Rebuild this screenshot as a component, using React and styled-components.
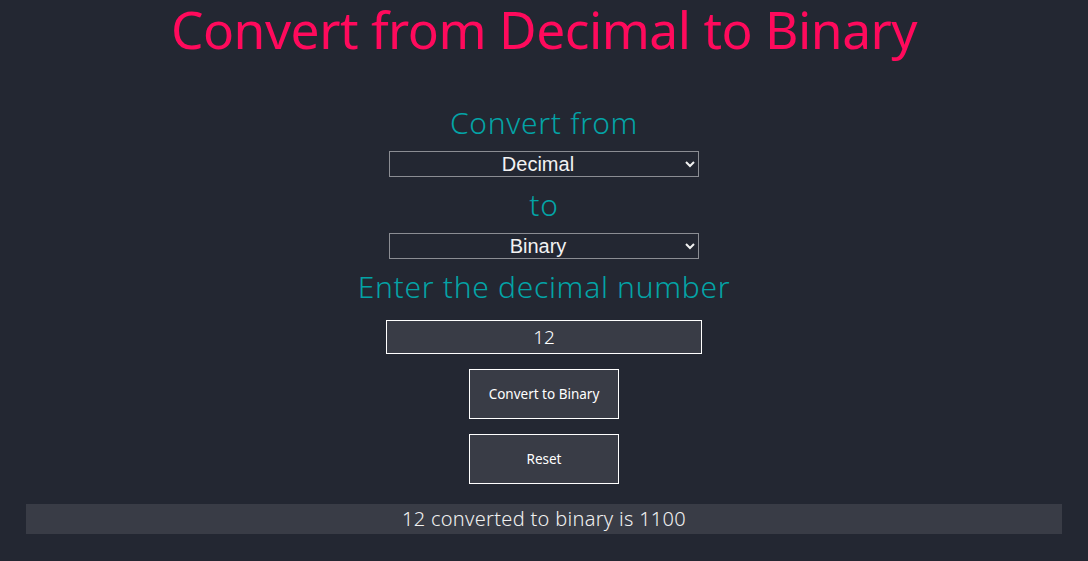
import styled, { createGlobalStyle } from "styled-components";

const GlobalStyle = createGlobalStyle`
  html, body {
    margin: 0;
    background: #232732;
  }
  body {
    font-family: "Noto Sans", sans-serif;
  }
`;

const App = () => {
  return (
    <>
      <GlobalStyle />
      <Page>
        <Title>Convert from Decimal to Binary</Title>

        <Form>
          <Label>Convert from</Label>
          <Select defaultValue='decimal'>
            <option value='decimal'>Decimal</option>
            <option value='binary'>Binary</option>
          </Select>

          <Label>to</Label>
          <Select defaultValue='binary'>
            <option value='decimal'>Decimal</option>
            <option value='binary'>Binary</option>
          </Select>

          <Label>Enter the decimal number</Label>
          <NumberInput defaultValue='12' />

          <Button $top={ 15 }>Convert to Binary</Button>
          <Button $top={ 15 }>Reset</Button>
        </Form>

        <Result>12 converted to binary is 1100</Result>
      </Page>
    </>
  );
}

const Page = styled.div`
  display: flex;
  flex-direction: column;
  align-items: center;
  padding: 0 26px;
`;

const Title = styled.h1`
  margin: 0;
  padding: 0 4px;
  font-family: "Noto Sans", sans-serif;
  font-weight: 400;
  font-size: 51.5px;
  line-height: 58px;
  color: #ff0a5c;
  letter-spacing: -0.5px;
  white-space: nowrap;
`;

const Form = styled.div`
  display: flex;
  flex-direction: column;
  align-items: center;
  margin-top: 37px;
`;

const Label = styled.div`
  font-family: "Noto Sans", sans-serif;
  font-weight: 300;
  font-size: 30px;
  line-height: 56px;
  letter-spacing: 0.7px;
  color: #03a3a6;
`;

const Select = styled.select`
  width: 310px;
  height: 26px;
  background: transparent;
  color: #f2f2f2;
  border: 1px solid #8b8d93;
  border-radius: 0;
  font-family: "Liberation Sans", Arial, sans-serif;
  font-size: 20px;
  text-align: center;
  text-align-last: center;

  option {
    background: #232732;
  }
`;

const NumberInput = styled.input`
  box-sizing: border-box;
  width: 316px;
  height: 34px;
  margin-top: 5px;
  background: #393c46;
  border: 1px solid #ffffff;
  color: #ffffff;
  font-family: "Noto Sans", sans-serif;
  font-weight: 300;
  font-size: 19px;
  text-align: center;
  outline: none;
`;

const Button = styled.button`
  box-sizing: border-box;
  width: 150px;
  height: 50px;
  margin-top: ${ props => props.$top }px;
  background: #393c46;
  border: 1px solid #ffffff;
  color: #ffffff;
  font-family: "Noto Sans", sans-serif;
  font-size: 13.5px;
  cursor: pointer;
`;

const Result = styled.div`
  align-self: stretch;
  margin-top: 20px;
  height: 30px;
  line-height: 30px;
  background: #393c46;
  color: #f0f0f0;
  font-family: "Noto Sans", sans-serif;
  font-weight: 300;
  font-size: 20px;
  letter-spacing: 0.3px;
  text-align: center;
`;

export default App;
